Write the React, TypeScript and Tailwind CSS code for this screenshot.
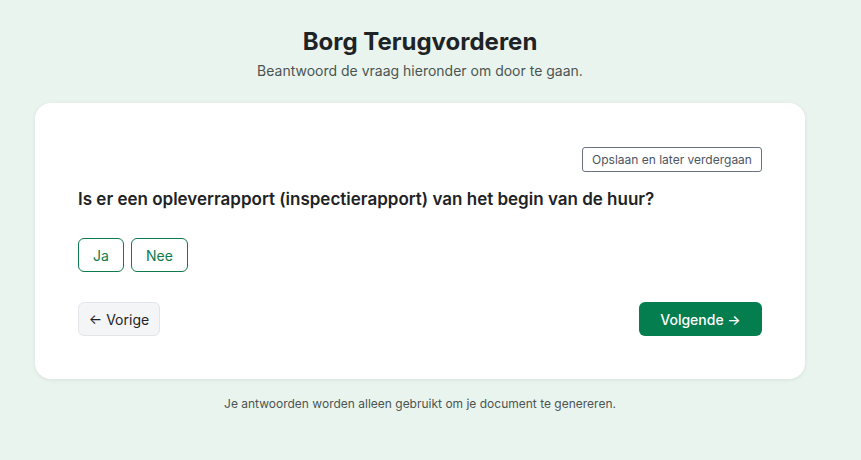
export default function App() {
  return (
    <div
      className="min-h-[460px] w-full bg-[#eaf4ee] text-[#1f2328]"
      style={{ fontFamily: 'Inter, "Noto Sans", sans-serif' }}
    >
      <div className="w-[840px] pt-[26px]">
        <h1 className="text-center text-[24px] font-bold leading-8 text-[#1e2325]">
          Borg Terugvorderen
        </h1>
        <p className="mt-[3px] text-center text-[14px] leading-5 text-[#4b5452]">
          Beantwoord de vraag hieronder om door te gaan.
        </p>

        <div className="mx-[35px] mt-[22px] rounded-2xl bg-white px-[43px] pb-[43px] pt-[44px] shadow-[0_1px_4px_rgba(0,0,0,0.08)]">
          <div className="flex justify-end">
            <button className="h-[25px] w-[180px] rounded-[3px] border border-[#6b7280] text-[12px] text-[#4b5563]">
              Opslaan en later verdergaan
            </button>
          </div>

          <h2 className="mt-[13px] text-[17px] font-semibold leading-7 text-[#1e2325]">
            Is er een opleverrapport (inspectierapport) van het begin van de huur?
          </h2>

          <div className="mt-[25px] flex gap-[7px]">
            <button className="h-[34px] w-[46px] rounded-md border border-[#0f7a4e] text-[14px] text-[#0f7a4e]">
              Ja
            </button>
            <button className="h-[34px] w-[57px] rounded-md border border-[#0f7a4e] text-[14px] text-[#0f7a4e]">
              Nee
            </button>
          </div>

          <div className="mt-[30px] flex items-center justify-between">
            <button className="h-[34px] w-[82px] rounded-md border border-[#e2e5e9] bg-[#f4f5f7] text-[14px] text-[#1e2325]">
              ← Vorige
            </button>
            <button className="h-[34px] w-[123px] rounded-md bg-[#047e4f] text-[14px] font-medium text-white">
              Volgende →
            </button>
          </div>
        </div>

        <p className="mt-[17px] text-center text-[12px] leading-4 text-[#4b5452]">
          Je antwoorden worden alleen gebruikt om je document te genereren.
        </p>
      </div>
    </div>
  )
}
